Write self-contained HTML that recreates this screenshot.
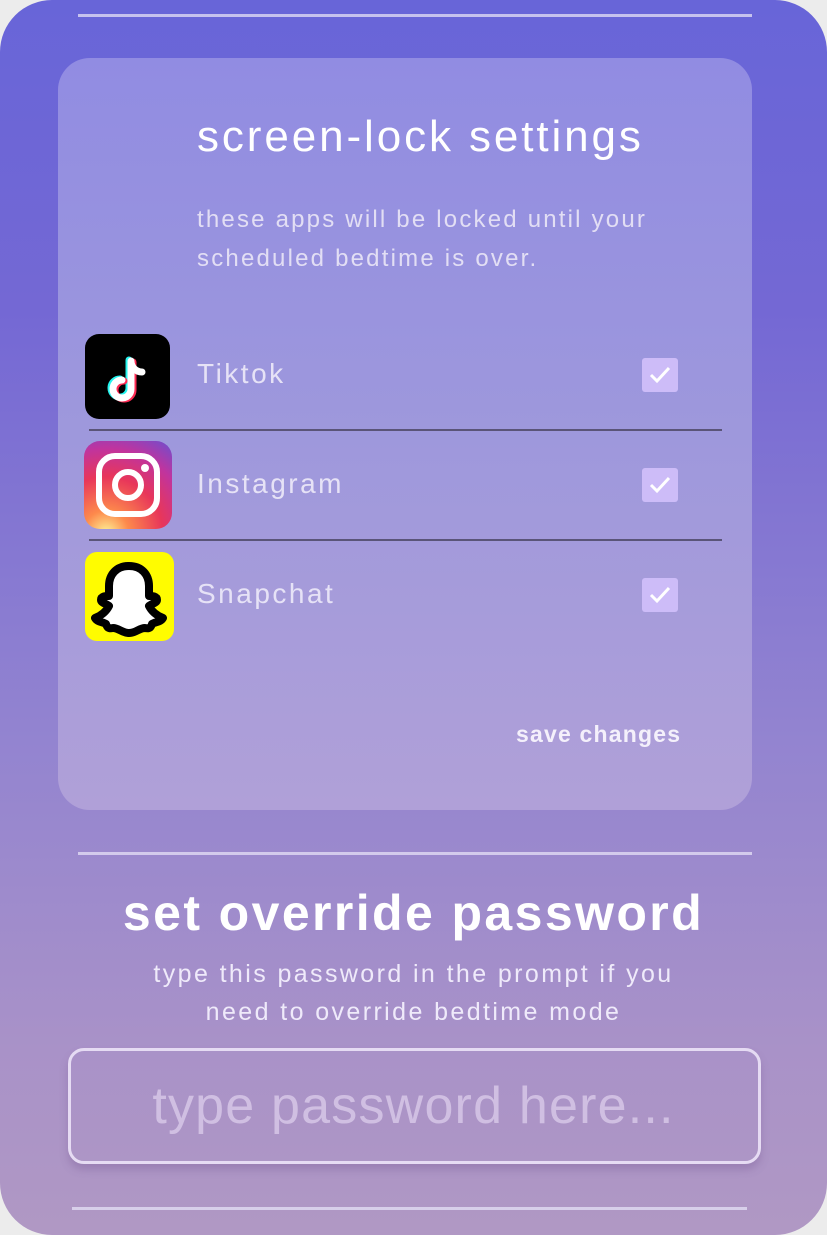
<!DOCTYPE html>
<html><head><meta charset="utf-8"><style>
*{margin:0;padding:0;box-sizing:border-box}
body{width:827px;height:1235px;background:#ececec;overflow:hidden;font-family:"Liberation Sans",sans-serif;position:relative}
.frame{position:absolute;left:0;top:0;width:827px;height:1235px;border-radius:52px;background:linear-gradient(180deg,#6865d8 0%,#7468d4 25%,#9384d0 60%,#a992c8 85%,#b098c4 100%)}
.line{position:absolute;height:3px;background:rgba(230,225,245,.75)}
.card{position:absolute;left:58px;top:58px;width:694px;height:752px;border-radius:32px;background:linear-gradient(180deg,#918ce2 0%,#9e98dc 50%,#b0a0d8 100%)}
.t{position:absolute;color:#fff;white-space:nowrap}
.icon{position:absolute;border-radius:12px;overflow:hidden}
.sep{position:absolute;left:89px;width:633px;height:2px;background:#5a5478}
.cb{position:absolute;left:642px;width:36px;height:34px;border-radius:3px;background:#cdbcf8}
.cb svg{position:absolute;left:6px;top:6px}
.name{font-size:28px;color:#e6e2f6;letter-spacing:2.5px}
</style></head><body>
<div class="frame"></div>
<div class="line" style="left:78px;top:14px;width:674px"></div>
<div class="card"></div>
<div class="t" style="left:197px;top:112px;font-size:44px;letter-spacing:2.9px">screen-lock settings</div>
<div class="t" style="left:197px;top:200px;font-size:24px;line-height:39px;letter-spacing:2.2px;color:#e2def4">these apps will be locked until your<br>scheduled bedtime is over.</div>

<div class="icon" style="left:85px;top:334px;width:85px;height:85px;background:#000;border-radius:14px">
<svg width="85" height="85" viewBox="0 0 85 85"><g fill="none" stroke-width="7" stroke-linecap="round">
<path d="M46 27v28a9 9 0 1 1-9-9" stroke="#25f4ee" transform="translate(-2,-1)"/>
<path d="M46 27v28a9 9 0 1 1-9-9" stroke="#fe2c55" transform="translate(2,1)"/>
<path d="M46 27v28a9 9 0 1 1-9-9M46 27c0 6 5 11 11 11" stroke="#fff"/></g></svg></div>
<div class="t name" style="left:197px;top:358px">Tiktok</div>
<div class="cb" style="top:358px"><svg width="24" height="22"><path d="M3 11l6 6L21 4" fill="none" stroke="#fff" stroke-width="3"/></svg></div>
<div class="sep" style="top:429px"></div>

<div class="icon" style="left:84px;top:441px;width:88px;height:88px;border-radius:16px;background:radial-gradient(circle at 25% 105%,#fdf497 0%,#fd8a4c 20%,#e8365a 50%,#c0349e 75%,#6b4fd0 100%)">
<svg width="88" height="88"><rect x="15" y="15" width="58" height="58" rx="16" fill="none" stroke="#fff" stroke-width="6"/><circle cx="44" cy="44" r="13" fill="none" stroke="#fff" stroke-width="6"/><circle cx="61" cy="27" r="4" fill="#fff"/></svg></div>
<div class="t name" style="left:197px;top:468px">Instagram</div>
<div class="cb" style="top:468px"><svg width="24" height="22"><path d="M3 11l6 6L21 4" fill="none" stroke="#fff" stroke-width="3"/></svg></div>
<div class="sep" style="top:539px"></div>

<div class="icon" style="left:85px;top:552px;width:89px;height:89px;background:#fffc00;border-radius:12px">
<svg width="89" height="89" viewBox="0 0 89 89"><path d="M44 14c-13 0-20 9-20 20v10c-3 0-8 0-8 4 0 3 6 4 8 6-3 6-9 10-14 12 2 4 8 4 11 6 1 3 2 5 7 4 6 0 9 5 16 5s10-5 16-5c5 1 6-1 7-4 3-2 9-2 11-6-5-2-11-6-14-12 2-2 8-3 8-6 0-4-5-4-8-4V34c0-11-7-20-20-20z" fill="#fff" stroke="#000" stroke-width="8" stroke-linejoin="round"/></svg></div>
<div class="t name" style="left:197px;top:578px">Snapchat</div>
<div class="cb" style="top:578px"><svg width="24" height="22"><path d="M3 11l6 6L21 4" fill="none" stroke="#fff" stroke-width="3"/></svg></div>

<div class="t" style="left:516px;top:721px;font-size:23px;font-weight:bold;letter-spacing:1.2px;color:#f4f0fb">save changes</div>

<div class="line" style="left:78px;top:852px;width:674px"></div>
<div class="t" style="left:0;width:827px;text-align:center;top:884px;font-size:50px;font-weight:bold;letter-spacing:2.4px">set override password</div>
<div class="t" style="left:0;width:827px;text-align:center;top:955px;font-size:25px;line-height:38px;letter-spacing:2.4px;color:#efeafa">type this password in the prompt if you<br>need to override bedtime mode</div>
<div style="position:absolute;left:68px;top:1048px;width:693px;height:116px;border:3px solid rgba(240,232,250,.85);border-radius:16px;box-shadow:0 6px 8px rgba(120,90,150,.35)"></div>
<div class="t" style="left:0;width:827px;text-align:center;top:1076px;font-size:52px;letter-spacing:1.2px;color:rgba(220,205,235,.75)">type password here...</div>
<div class="line" style="left:72px;top:1207px;width:675px"></div>
</body></html>
